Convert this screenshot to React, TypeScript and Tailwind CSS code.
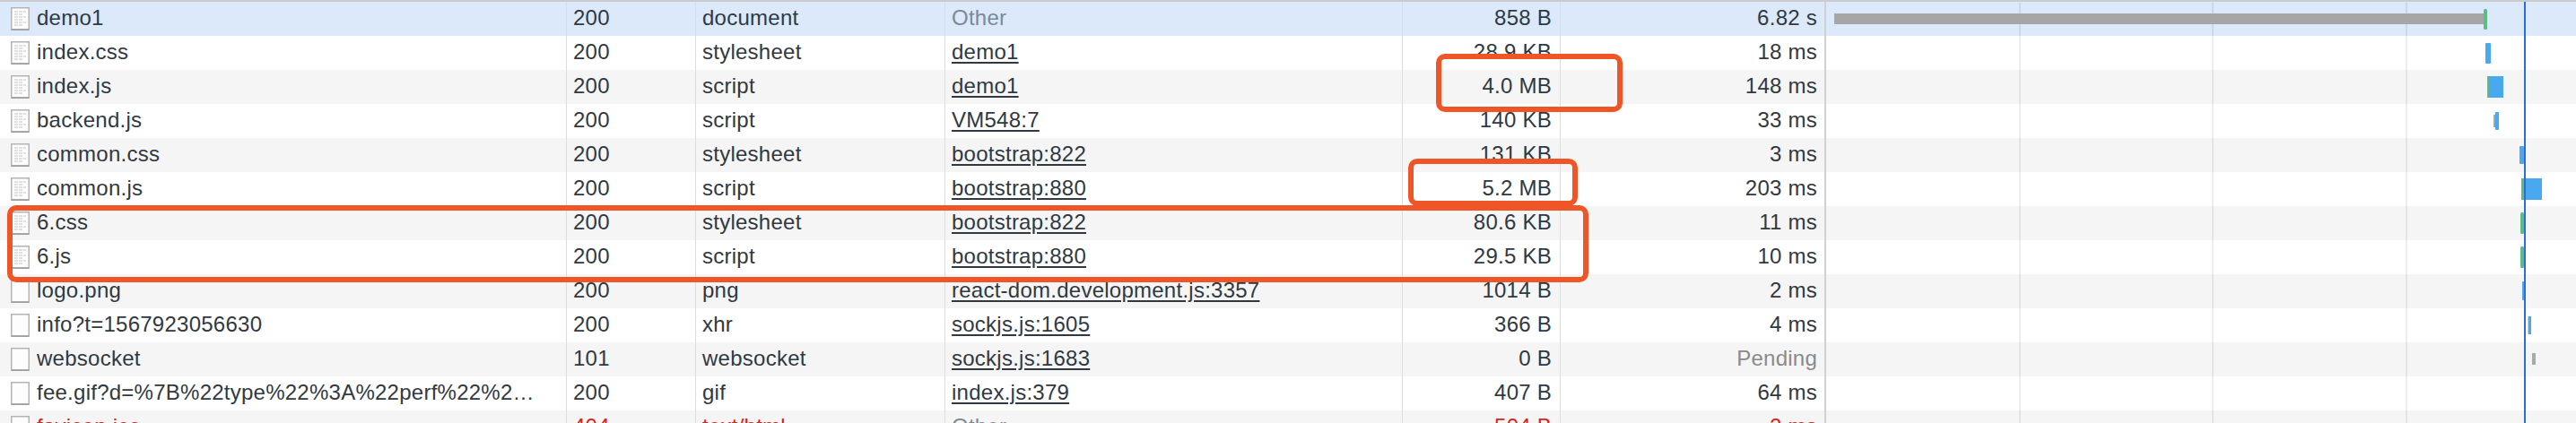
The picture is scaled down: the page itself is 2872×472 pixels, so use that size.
import React from "react";

type Row = {
  name: string;
  status: string;
  type: string;
  init: string;
  size: string;
  time: string;
  lines?: boolean;
  red?: boolean;
  pending?: boolean;
};

const rows: Row[] = [
  { name: "demo1", status: "200", type: "document", init: "Other", size: "858 B", time: "6.82 s", lines: true },
  { name: "index.css", status: "200", type: "stylesheet", init: "demo1", size: "28.9 KB", time: "18 ms", lines: true },
  { name: "index.js", status: "200", type: "script", init: "demo1", size: "4.0 MB", time: "148 ms", lines: true },
  { name: "backend.js", status: "200", type: "script", init: "VM548:7", size: "140 KB", time: "33 ms", lines: true },
  { name: "common.css", status: "200", type: "stylesheet", init: "bootstrap:822", size: "131 KB", time: "3 ms", lines: true },
  { name: "common.js", status: "200", type: "script", init: "bootstrap:880", size: "5.2 MB", time: "203 ms", lines: true },
  { name: "6.css", status: "200", type: "stylesheet", init: "bootstrap:822", size: "80.6 KB", time: "11 ms", lines: true },
  { name: "6.js", status: "200", type: "script", init: "bootstrap:880", size: "29.5 KB", time: "10 ms", lines: true },
  { name: "logo.png", status: "200", type: "png", init: "react-dom.development.js:3357", size: "1014 B", time: "2 ms" },
  { name: "info?t=1567923056630", status: "200", type: "xhr", init: "sockjs.js:1605", size: "366 B", time: "4 ms" },
  { name: "websocket", status: "101", type: "websocket", init: "sockjs.js:1683", size: "0 B", time: "Pending", pending: true },
  { name: "fee.gif?d=%7B%22type%22%3A%22perf%22%2C%22data%22%3A%7B", status: "200", type: "gif", init: "index.js:379", size: "407 B", time: "64 ms" },
  { name: "favicon.ico", status: "404", type: "text/html", init: "Other", size: "504 B", time: "2 ms", red: true },
];

function FileIcon({ lines }: { lines?: boolean }) {
  return (
    <svg width="21" height="26" viewBox="0 0 21 26" className="shrink-0">
      <rect x="0.75" y="0.75" width="19.5" height="24.5" fill="#fdfdfd" stroke="#b4b4b4" strokeWidth="1.5" />
      <line x1="1" y1="25" x2="20" y2="25" stroke="#9a9a9a" strokeWidth="1.5" />
      {lines &&
        [5, 8, 11, 14, 17, 20].map((y) => (
          <line key={y} x1="4" y1={y} x2={y % 2 ? 17 : 13} y2={y} stroke="#d6d6d6" strokeWidth="1.5" strokeDasharray="4 1" />
        ))}
    </svg>
  );
}

function Waterfall() {
  const blue = "#4aa8f0";
  const green = "#5cbc86";
  const gray = "#a6a6a6";
  return (
    <svg width="837" height="472" viewBox="2035 0 837 472" className="absolute right-0 top-0 pointer-events-none">
      {[2251, 2466, 2682].map((x) => (
        <rect key={x} x={x} y="3" width="2" height="469" fill="#000" fillOpacity="0.07" />
      ))}
      <rect x="2045" y="15" width="724" height="12" fill={gray} />
      <rect x="2769" y="10" width="4" height="23" rx="1.5" fill={green} />
      <rect x="2771" y="48" width="6" height="23" rx="1" fill={blue} />
      <rect x="2773" y="85" width="3" height="24" fill={green} />
      <rect x="2775" y="85" width="16" height="24" fill={blue} />
      <rect x="2780" y="128" width="2" height="14" fill={gray} />
      <rect x="2782" y="125" width="4" height="20" rx="1" fill={blue} />
      <rect x="2809" y="163" width="5" height="20" rx="1" fill={blue} />
      <rect x="2811" y="199" width="3" height="24" fill={green} />
      <rect x="2814" y="199" width="20" height="24" fill={blue} />
      <rect x="2810" y="237" width="4" height="24" rx="1.5" fill={green} />
      <rect x="2810" y="275" width="4" height="24" rx="1.5" fill={green} />
      <rect x="2812" y="314" width="4" height="21" rx="1" fill={blue} />
      <rect x="2818" y="353" width="1" height="20" fill="#c9d3dc" />
      <rect x="2819" y="353" width="3" height="20" fill={blue} />
      <rect x="2823" y="394" width="4" height="13" fill="#aaaaaa" />
      <rect x="2814" y="2" width="2" height="470" fill="#2b6fd4" />
    </svg>
  );
}

export default function App() {
  return (
    <div className="relative h-[472px] w-[2872px] overflow-hidden bg-white font-['Liberation_Sans',Arial,sans-serif] text-[24px] tracking-[0.25px] text-[#303942]">
      <div className="h-[2px] bg-[#cbcbcb]" />
      {rows.map((r, i) => {
        const bg = i === 0 ? "bg-[#dbe9fb]" : i % 2 === 1 ? "bg-white" : "bg-[#f5f5f5]";
        const txt = r.red ? "text-[#d8241c]" : "";
        return (
          <div
            key={r.name}
            className={`grid h-[38px] grid-cols-[632px_144px_278px_510px_176px_296px_836px] leading-[36px] ${bg} ${txt}`}
          >
            <div className="flex min-w-0 items-start gap-[8px] border-r border-[#dcdcdc] pl-[12px] pr-[22px]">
              <div className="mt-[6px] shrink-0">
                <FileIcon lines={r.lines} />
              </div>
              <span className="truncate">{r.name}</span>
            </div>
            <div className="border-r border-[#dcdcdc] pl-[7px]">{r.status}</div>
            <div className="border-r border-[#dcdcdc] pl-[7px]">{r.type}</div>
            <div className="overflow-hidden whitespace-nowrap border-r border-[#dcdcdc] pl-[7px]">
              {r.init === "Other" ? (
                <span className="text-[#7b8a96]">{r.init}</span>
              ) : (
                <span className="underline underline-offset-[3px]">{r.init}</span>
              )}
            </div>
            <div className="border-r border-[#dcdcdc] pr-[9px] text-right">{r.size}</div>
            <div className={`border-r-2 border-[#d0d0d0] pr-[8px] text-right ${r.pending ? "text-[#8a8a8a]" : ""}`}>{r.time}</div>
            <div />
          </div>
        );
      })}
      <Waterfall />
      <div className="absolute left-[1601px] top-[60px] h-[65px] w-[208px] rounded-[10px] border-[6px] border-[#ee5527]" />
      <div className="absolute left-[1570px] top-[177px] h-[53px] w-[189px] rounded-[10px] border-[6px] border-[#ee5527]" />
      <div className="absolute left-[8px] top-[229px] h-[86px] w-[1763px] rounded-[10px] border-[6px] border-[#ee5527]" />
    </div>
  );
}
